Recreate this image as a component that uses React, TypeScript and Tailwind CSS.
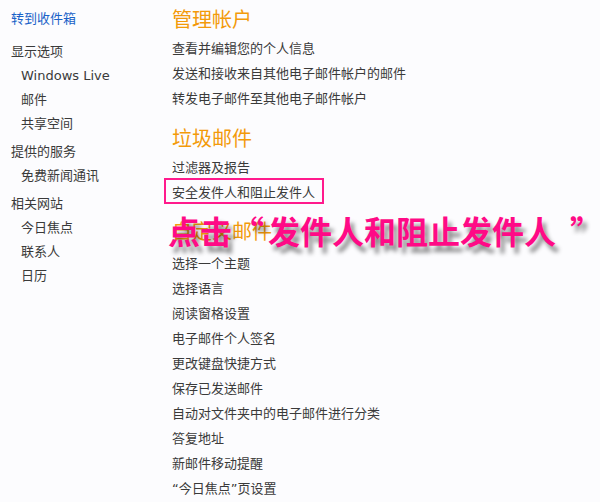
const sideGroups = [
  { title: "显示选项", items: ["Windows Live", "邮件", "共享空间"] },
  { title: "提供的服务", items: ["免费新闻通讯"] },
  { title: "相关网站", items: ["今日焦点", "联系人", "日历"] },
];

const account = [
  "查看并编辑您的个人信息",
  "发送和接收来自其他电子邮件帐户的邮件",
  "转发电子邮件至其他电子邮件帐户",
];

const custom = [
  "选择一个主题",
  "选择语言",
  "阅读窗格设置",
  "电子邮件个人签名",
  "更改键盘快捷方式",
  "保存已发送邮件",
  "自动对文件夹中的电子邮件进行分类",
  "答复地址",
  "新邮件移动提醒",
  "“今日焦点”页设置",
];

const App = () => {
  return (
    <div className="relative w-[600px] h-[502px] overflow-hidden bg-[#fcfcfe] text-[13px] text-[#3a3a3a] font-['DejaVu_Sans','Noto_Sans_CJK_SC',sans-serif] flex">
      {/* sidebar */}
      <aside className="w-[172px] pl-[11px] pt-[7px] flex flex-col">
        <a className="h-[24px] leading-[24px] text-[#1a62c8]">转到收件箱</a>
        <div className="mt-[9px] flex flex-col gap-1">
          {sideGroups.map((g) => (
            <div key={g.title} className="flex flex-col">
              <div className="h-[24px] leading-[24px]">{g.title}</div>
              {g.items.map((it) => (
                <div key={it} className="h-[24px] leading-[24px] pl-[10px]">
                  {it}
                </div>
              ))}
            </div>
          ))}
        </div>
      </aside>

      {/* main options */}
      <main className="flex-1 pt-[6px] flex flex-col">
        <h2 className="h-[28px] leading-[28px] text-[20px] text-[#f39a0a]">管理帐户</h2>
        <ul className="mt-[2px]">
          {account.map((t) => (
            <li key={t} className="h-[25px] leading-[25px]">{t}</li>
          ))}
        </ul>

        <h2 className="mt-[14px] h-[28px] leading-[28px] text-[20px] text-[#f39a0a]">垃圾邮件</h2>
        <ul className="mt-[2px]">
          <li className="h-[25px] leading-[25px]">过滤器及报告</li>
          <li className="relative h-[25px] leading-[25px]">
            安全发件人和阻止发件人
            <span className="absolute left-[-8px] top-[-2px] w-[160px] h-[26px] border-2 border-[#ff1a8c]" />
          </li>
        </ul>

        <h2 className="mt-[13px] h-[28px] leading-[28px] text-[20px] text-[#f39a0a]">自定义邮件</h2>
        <ul className="mt-[5px]">
          {custom.map((t) => (
            <li key={t} className="h-[25px] leading-[25px]">{t}</li>
          ))}
        </ul>
      </main>

      {/* annotation over the page */}
      <div className="absolute left-[168px] top-[212px] h-[36px] leading-[36px] text-[32px] font-bold text-[#ff0a86] whitespace-nowrap font-['Noto_Sans_CJK_SC',sans-serif] [text-shadow:4px_6px_4px_rgba(0,0,0,0.45)]">
        点击<span className="inline-block w-[36px] text-right pr-[10px]">“</span>发件人和阻止发件人<span className="inline-block pl-[14px]">”</span>
      </div>
    </div>
  );
};

export default App;
